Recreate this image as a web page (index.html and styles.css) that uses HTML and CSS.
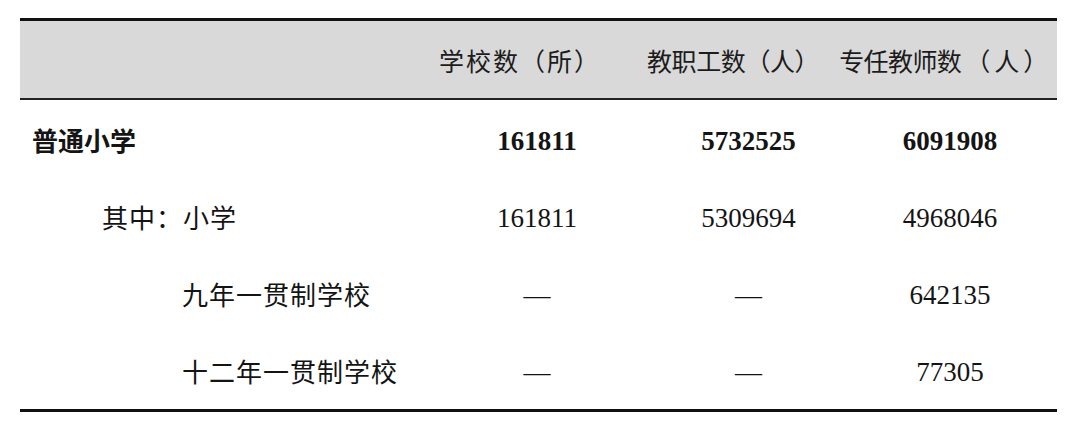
FILE: index.html
```html
<!DOCTYPE html>
<html lang="zh">
<head>
<meta charset="utf-8">
<title>普通小学</title>
<link rel="stylesheet" href="styles.css">
</head>
<body>
<div class="table">
  <div class="head">
    <span class="h h1">学校数（所）</span>
    <span class="h h2">教职工数（人）</span>
    <span class="h h3"><span class="h3-main">专任教师数</span><span class="h3-unit">（人）</span></span>
  </div>
  <div class="body">
    <div class="row bold">
      <div class="label l0">普通小学</div>
      <div class="num c2">161811</div>
      <div class="num c3">5732525</div>
      <div class="num c4">6091908</div>
    </div>
    <div class="row">
      <div class="label l1">其中：小学</div>
      <div class="num c2">161811</div>
      <div class="num c3">5309694</div>
      <div class="num c4">4968046</div>
    </div>
    <div class="row">
      <div class="label l2">九年一贯制学校</div>
      <div class="num c2">—</div>
      <div class="num c3">—</div>
      <div class="num c4">642135</div>
    </div>
    <div class="row">
      <div class="label l2">十二年一贯制学校</div>
      <div class="num c2">—</div>
      <div class="num c3">—</div>
      <div class="num c4">77305</div>
    </div>
  </div>
</div>
</body>
</html>
```

FILE: styles.css
```css
html, body {
  margin: 0;
  padding: 0;
  background: #ffffff;
}

body {
  padding: 18px 0 0 20px;
  font-family: "Noto Sans CJK SC", "Noto Sans", sans-serif;
  color: #141414;
}

.table {
  width: 1037px;
  border-top: 3px solid #111;
  border-bottom: 3px solid #111;
}

.head {
  height: 79px;
  background: #d9d9d9;
  border-bottom: 2px solid #222;
  display: flex;
  align-items: center;
  padding-left: 419px;
  padding-top: 2px;
  box-sizing: border-box;
  font-size: 26px;
  color: #1c1c1c;
}

.h {
  white-space: nowrap;
  line-height: 1;
}

.h1 {
  font-size: 25px;
  letter-spacing: 2px;
}

.h2 {
  margin-left: 46px;
  font-size: 25px;
  letter-spacing: -0.4px;
}

.h3 {
  margin-left: 20px;
  font-size: 25px;
}

.h3-main {
  letter-spacing: -0.6px;
}

.h3-unit {
  margin-left: 4px;
  letter-spacing: 4px;
}

.row {
  height: 77.25px;
  display: grid;
  grid-template-columns: 417px 200px 223px 197px;
  align-items: center;
  padding-top: 2px;
  box-sizing: border-box;
}

.label {
  font-size: 26px;
  line-height: 1;
  white-space: nowrap;
  letter-spacing: 1px;
}

.l0 {
  padding-left: 12px;
  letter-spacing: 0;
}

.l1 {
  padding-left: 82px;
}

.l2 {
  padding-left: 162px;
}

.bold .label,
.bold .num {
  font-weight: 700;
}

.num {
  font-family: "Liberation Serif", "Times New Roman", serif;
  font-size: 27px;
  line-height: 1;
  text-align: center;
  padding-top: 3px;
}

.c4 {
  padding-right: 17px;
}
```
